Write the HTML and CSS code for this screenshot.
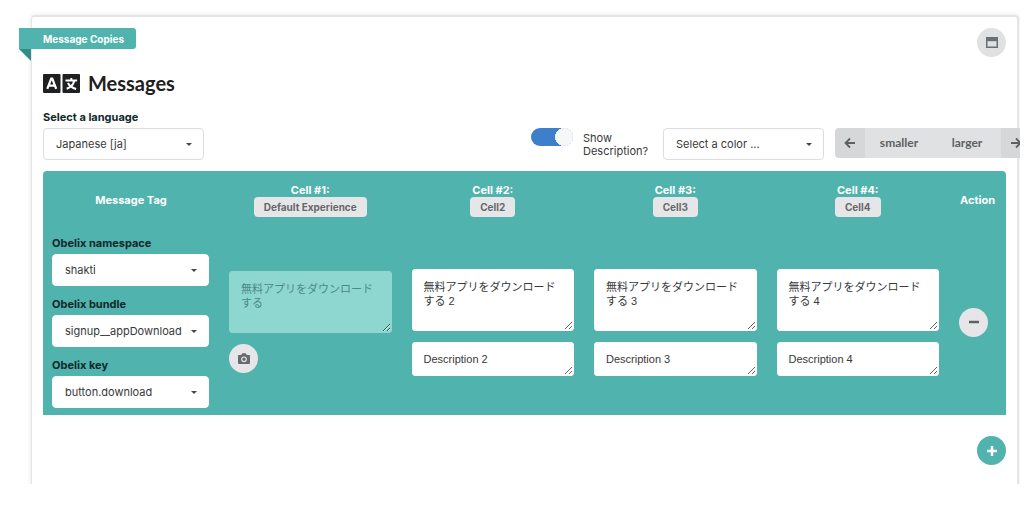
FILE: index.html
```html
<!DOCTYPE html>
<html lang="en">
<head>
<meta charset="utf-8">
<title>Messages</title>
<link rel="stylesheet" href="styles.css">
</head>
<body>
<main class="viewport">
  <section class="panel">
    <div class="panel-top">
      <div class="ribbon">Message Copies</div>
      <button class="round" type="button" aria-label="Toggle window">
        <svg width="12" height="11" viewBox="0 0 12 11"><path d="M.75.75h10.500v9.500H.75z" fill="none" stroke="#6b7072" stroke-width="1.500"/><path d="M0 0h12v4.200H0z" fill="#6b7072"/></svg>
      </button>
    </div>
    <h1 class="title">
      <svg width="37" height="19" viewBox="0 0 37 19" aria-hidden="true">
        <rect width="17.5" height="19" rx="1" fill="#1f2021"/><rect x="19.5" width="17.5" height="19" rx="1" fill="#1f2021"/>
        <g fill="none" stroke="#fff" stroke-width="2.2"><path d="M4.3 14.8 8.2 4.6h1.1l3.9 10.2M5.6 11.7h6.3"/></g>
        <g fill="none" stroke="#fff" stroke-width="2"><path d="M22.5 6.5h11.6M28.3 4v2.5M31.3 6.5c-.8 4-4 7-7.6 8.3M24.9 9c1.4 2.6 4.700 5 8.200 6"/></g>
      </svg>
      Messages
    </h1>

    <div class="toolbar">
      <div class="field">
        <label for="language">Select a language</label>
        <span class="select outlined"><select id="language"><option>Japanese [ja]</option></select></span>
      </div>
      <div class="tools">
        <label class="toggle"><input type="checkbox" checked><span>Show Description?</span></label>
        <span class="select outlined"><select aria-label="Color"><option>Select a color ...</option></select></span>
        <div class="group">
          <button class="arrow" type="button" aria-label="Previous"><svg width="12" height="12" viewBox="0 0 12 12"><path d="M11 6H2M6 1.500 1.500 6 6 10.500" fill="none" stroke="#5d6163" stroke-width="1.800"/></svg></button>
          <button type="button">smaller</button>
          <button type="button">larger</button>
          <button class="arrow" type="button" aria-label="Next"><svg width="12" height="12" viewBox="0 0 12 12"><path d="M1 6h9M6 1.500 10.500 6 6 10.500" fill="none" stroke="#5d6163" stroke-width="1.800"/></svg></button>
        </div>
      </div>
    </div>

    <table class="messages">
      <colgroup><col class="col-tag"><col><col><col><col><col class="col-action"></colgroup>
      <thead>
        <tr>
          <th>Message Tag</th>
          <th>Cell #1:<br><span class="chip">Default Experience</span></th>
          <th>Cell #2:<br><span class="chip">Cell2</span></th>
          <th>Cell #3:<br><span class="chip">Cell3</span></th>
          <th>Cell #4:<br><span class="chip">Cell4</span></th>
          <th class="action">Action</th>
        </tr>
      </thead>
      <tbody>
        <tr>
          <td>
            <div class="tags">
              <div class="field"><label for="namespace">Obelix namespace</label><span class="select"><select id="namespace"><option>shakti</option></select></span></div>
              <div class="field"><label for="bundle">Obelix bundle</label><span class="select"><select id="bundle"><option>signup__appDownload</option></select></span></div>
              <div class="field"><label for="key">Obelix key</label><span class="select"><select id="key"><option>button.download</option></select></span></div>
            </div>
          </td>
          <td>
            <div class="copy">
              <textarea class="message" aria-label="Default message" lang="ja" disabled>無料アプリをダウンロードする</textarea>
              <button class="round light" type="button" aria-label="Screenshot"><svg width="12" height="11" viewBox="0 0 12 11"><path d="M1 2h2.300L4.200.3h3.600L8.700 2H11q1 0 1 1v7q0 1-1 1H1q-1 0-1-1V3q0-1 1-1z" fill="#666a6c"/><circle cx="6" cy="6.300" r="2.300" fill="none" stroke="#e6e6e8" stroke-width="1.100"/></svg></button>
            </div>
          </td>
          <td><div class="copy"><textarea class="message" aria-label="Message 2" lang="ja">無料アプリをダウンロードする 2</textarea><textarea class="description" aria-label="Description for cell 2">Description 2</textarea></div></td>
          <td><div class="copy"><textarea class="message" aria-label="Message 3" lang="ja">無料アプリをダウンロードする 3</textarea><textarea class="description" aria-label="Description for cell 3">Description 3</textarea></div></td>
          <td><div class="copy"><textarea class="message" aria-label="Message 4" lang="ja">無料アプリをダウンロードする 4</textarea><textarea class="description" aria-label="Description for cell 4">Description 4</textarea></div></td>
          <td>
            <button class="round light" type="button" aria-label="Remove row"><svg width="10" height="10" viewBox="0 0 10 10"><path d="M0 5h10" stroke="#5d6163" stroke-width="2.500"/></svg></button>
          </td>
        </tr>
      </tbody>
    </table>

    <div class="footer">
      <button class="round add" type="button" aria-label="Add row"><svg width="10" height="10" viewBox="0 0 10 10"><path d="M0 5h10M5 0v10" stroke="#fff" stroke-width="2.500"/></svg></button>
    </div>
  </section>
</main>
</body>
</html>
```
FILE: styles.css
```css
* { box-sizing: border-box; }

body {
  margin: 0;
  background: #fff;
  color: #37393a;
  font: 11px/14px Inter, "Noto Sans CJK JP", sans-serif;
}

button, select, textarea { font: inherit; color: inherit; }
button { border: 0; padding: 0; cursor: pointer; }
svg { display: block; flex: none; }

.viewport {
  margin-right: 4px;
  padding: 15px 1px 0 31px;
  overflow: hidden;
}

.panel {
  margin-bottom: -4px;
  padding: 11px 11px 21px;
  border: 2px solid #e5e6e7;
  border-left-width: 1px;
  border-radius: 4px;
  box-shadow: 0 0 4px rgba(0, 0, 0, 0.12);
}

.panel-top {
  display: flex;
  justify-content: space-between;
  align-items: flex-start;
}

.ribbon {
  position: relative;
  margin-left: -24px;
  padding: 4px 12px 3px 24px;
  border-radius: 0 3px 3px 0;
  background: #50b3ad;
  color: #fff;
  font-size: 10px;
  font-weight: 700;
}

.ribbon::after {
  content: "";
  position: absolute;
  top: 100%;
  left: 0;
  border-top: 12px solid #2f8c86;
  border-left: 12px solid transparent;
}

.round {
  display: flex;
  align-items: center;
  justify-content: center;
  width: 29px;
  height: 29px;
  border-radius: 50%;
  background: #e0e1e2;
}
.round.light { background: #e6e6e8; }
.round.add { background: #50b3ad; }

.title {
  display: flex;
  align-items: center;
  gap: 8px;
  margin: 13px 0 14px;
  color: #1f2021;
  font: 700 20px/26px Lato, sans-serif;
}

.toolbar {
  display: flex;
  justify-content: space-between;
  align-items: flex-end;
}

.field { display: flex; flex-direction: column; gap: 4px; }
.field label { color: #10282a; font-weight: 700; }

.select { position: relative; display: block; }
.select select {
  display: block;
  width: 100%;
  height: 32px;
  padding: 0 12px;
  border: 1px solid #fff;
  border-radius: 4px;
  background: #fff;
  appearance: none;
}
.select.outlined { width: 161px; }
.select.outlined select { border-color: #dcdddf; }
.select::after {
  content: "";
  position: absolute;
  top: 15px;
  right: 12px;
  border: 3px solid transparent;
  border-top-color: #444748;
  border-bottom: 0;
  pointer-events: none;
}

.tools {
  display: flex;
  align-items: flex-start;
  gap: 11px;
  margin-right: -25px;
}

.toggle { display: flex; gap: 10px; line-height: 13px; }
.toggle span { width: 69px; padding-top: 4px; }
.toggle input {
  appearance: none;
  width: 42px;
  height: 18px;
  margin: 0;
  border-radius: 9px;
  background: radial-gradient(circle at 33px 9px, #f7f7f8 8px, #dfe1e4 9px, transparent 9px), #3d7fcb;
}

.group { display: flex; border-radius: 4px; overflow: hidden; }
.group button {
  display: flex;
  align-items: center;
  justify-content: center;
  width: 68px;
  height: 30px;
  background: #e0e1e2;
  color: #5d6163;
  font: 700 12px/14px Lato, sans-serif;
}
.group .arrow { width: 30px; background: #d5d7d8; }

.messages {
  width: 100%;
  margin-top: 11px;
  table-layout: fixed;
  border-spacing: 0;
  border-radius: 4px 4px 0 0;
  background: #50b3ad;
}
.col-tag { width: 176px; }
.col-action { width: 57px; }

th {
  padding: 12px 4px;
  color: #fff;
  font-weight: 700;
  line-height: 14px;
}
th.action { padding: 12px 0; }
.chip {
  display: inline-block;
  padding: 3px 10px;
  border-radius: 4px;
  background: #e6e6e8;
  color: #66696b;
  font-size: 10px;
}

td { padding: 7px 10px; vertical-align: middle; }
td:first-child { padding-left: 9px; }

.tags { display: flex; flex-direction: column; gap: 11px; }
.copy { display: flex; flex-direction: column; gap: 11px; }

textarea {
  display: block;
  width: 100%;
  padding: 10px 11px;
  border: 1px solid #fff;
  border-radius: 3px;
  background: #fff;
  font-family: "Liberation Sans", "Noto Sans CJK JP", sans-serif;
  overflow: hidden;
  resize: vertical;
}
.message { height: 62px; }
.description { height: 34px; padding-top: 9px; }
textarea:disabled {
  border-color: #8ed6d0;
  background: #8ed6d0;
  color: #4a8a86;
}

.footer { display: flex; justify-content: flex-end; margin-top: 21px; }
```
